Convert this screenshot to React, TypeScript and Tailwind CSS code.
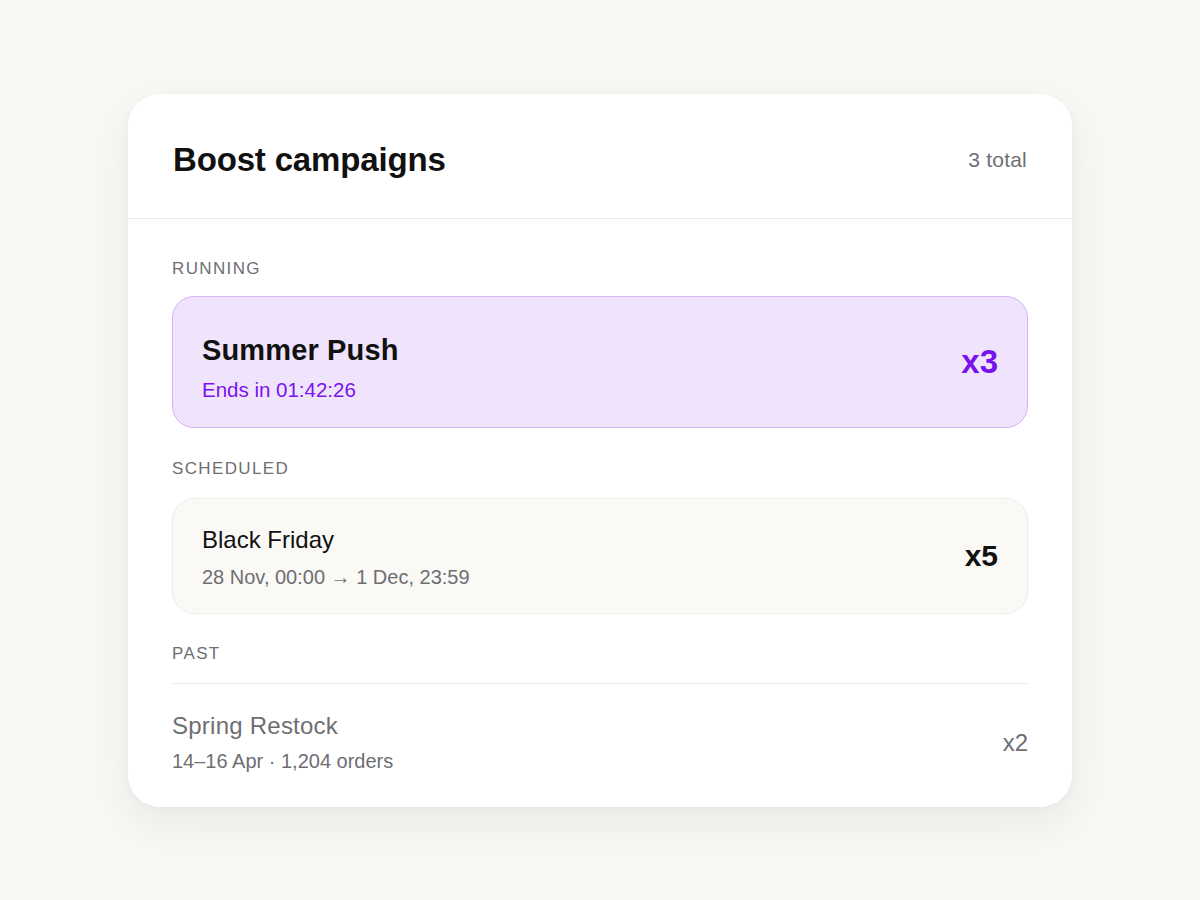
import React from "react";

const font = { fontFamily: '"Liberation Sans", Arial, sans-serif' };

function Label({ children }: { children: React.ReactNode }) {
  return (
    <div className="text-[17px] leading-[24px] tracking-[0.08em] text-[#6e6e73] uppercase mb-[17px]">
      {children}
    </div>
  );
}

export default function App() {
  return (
    <div
      className="min-h-[900px] w-full bg-[#f9f8f5] pt-[94px]"
      style={font}
    >
      <div className="mx-auto w-[944px] rounded-[32px] bg-white shadow-[0_16px_48px_rgba(30,25,10,0.07),0_2px_8px_rgba(30,25,10,0.03)]">
        <div className="flex h-[125px] items-center justify-between border-b border-[#ecebe7] px-[45px] pt-[8px]">
          <h1 className="text-[33px] font-bold leading-[40px] tracking-[-0.005em] text-[#111111]">
            Boost campaigns
          </h1>
          <span className="text-[21px] leading-[28px] tracking-[0.01em] text-[#6e6e73]">
            3 total
          </span>
        </div>

        <div className="px-[44px] pt-[38px] pb-[33px]">
          <div className="-mb-[2px]">
            <Label>Running</Label>
          </div>
          <div className="flex h-[132px] items-center justify-between rounded-[22px] border-[1.5px] border-[#d5b3f7] bg-[#f0e4fd] px-[29px]">
            <div className="pt-[12px]">
              <div className="text-[29px] font-bold leading-[34px] tracking-[0.005em] text-[#111111]">
                Summer Push
              </div>
              <div className="mt-[10px] text-[20.5px] leading-[26px] text-[#7a12ee]">
                Ends in 01:42:26
              </div>
            </div>
            <div className="text-[33px] font-bold leading-[40px] text-[#7a12ee]">x3</div>
          </div>

          <div className="mt-[29px]">
            <Label>Scheduled</Label>
            <div className="flex h-[116px] items-center justify-between rounded-[22px] border border-[#eeede8] bg-[#faf9f5] px-[29px]">
              <div className="pt-[3px]">
                <div className="text-[24px] leading-[30px] text-[#111111]">
                  Black Friday
                </div>
                <div className="mt-[9px] text-[20px] leading-[26px] text-[#6e6e73]">
                  28 Nov, 00:00 → 1 Dec, 23:59
                </div>
              </div>
              <div className="text-[30px] font-bold leading-[36px] text-[#111111]">x5</div>
            </div>
          </div>

          <div className="mt-[28px]">
            <Label>Past</Label>
            <div className="border-t border-[#ecebe7] pt-[27px] flex items-center justify-between">
              <div>
                <div className="text-[24px] leading-[30px] tracking-[0.01em] text-[#6e6e73]">
                  Spring Restock
                </div>
                <div className="mt-[7px] text-[20px] leading-[26px] text-[#6e6e73]">
                  14–16 Apr · 1,204 orders
                </div>
              </div>
              <div className="text-[24px] leading-[30px] text-[#6e6e73]">x2</div>
            </div>
          </div>
        </div>
      </div>
    </div>
  );
}
